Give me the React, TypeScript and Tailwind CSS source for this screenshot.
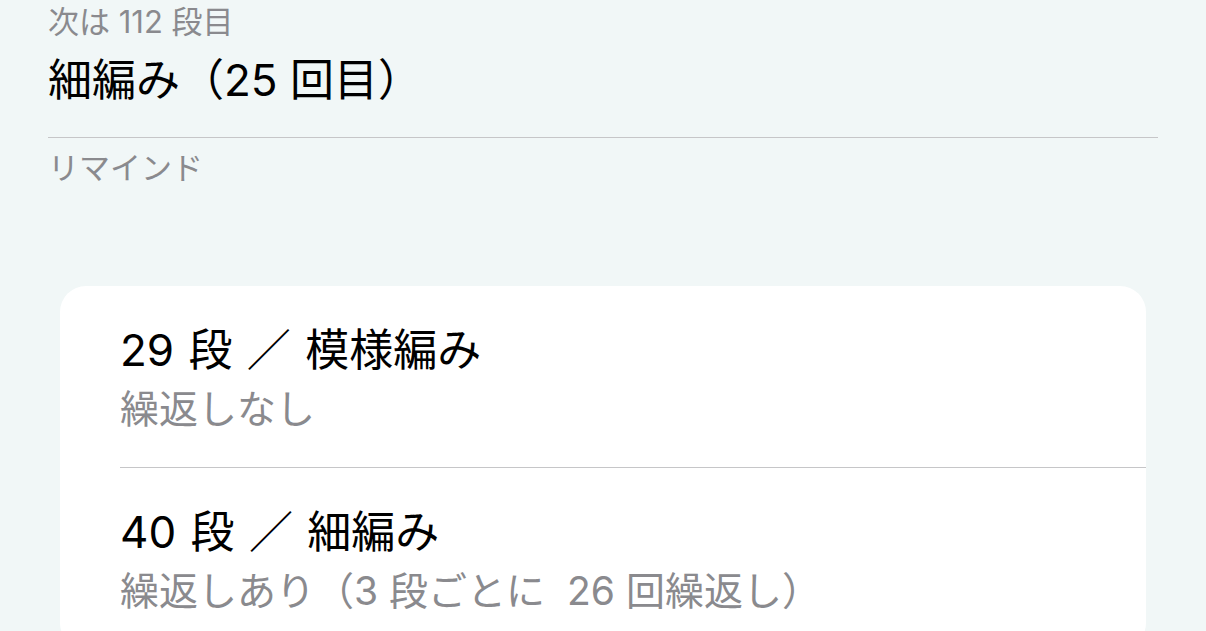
import React from "react";

const font = { fontFamily: '"Inter", "Noto Sans CJK JP", sans-serif' };

export default function App() {
  return (
    <div
      className="w-[1206px] h-[631px] overflow-hidden bg-[#f1f7f7] text-black"
      style={font}
    >
      <div className="px-[48px] pt-[5px]">
        <div className="text-[31px] leading-[34px] text-[#8a8a8e]">次は 112 段目</div>
        <div className="mt-[15px] text-[44px] leading-[52px]">細編み（25 回目）</div>
        <div className="mt-[31px] h-px bg-[#c6c6c8]" />
        <div className="mt-[13px] text-[31px] leading-[34px] text-[#8a8a8e]">リマインド</div>
      </div>
      <div className="mx-[60px] mt-[101px] rounded-[26px] bg-white">
        <div className="pl-[60px]">
          <div className="pt-[38px] pb-[35px]">
            <div className="text-[44px] leading-[52px] [word-spacing:2px]">29 段 ／ 模様編み</div>
            <div className="mt-[10px] text-[39px] leading-[46px] text-[#8a8a8e]">繰返しなし</div>
          </div>
          <div className="h-px bg-[#c6c6c8]" />
          <div className="pt-[38px] pb-[35px]">
            <div className="text-[44px] leading-[52px] [word-spacing:2px]">40 段 ／ 細編み</div>
            <div className="mt-[10px] text-[39px] leading-[46px] text-[#8a8a8e]">
              繰返しあり（3 段ごとに&nbsp;&nbsp;26 回繰返し）
            </div>
          </div>
        </div>
      </div>
    </div>
  );
}
